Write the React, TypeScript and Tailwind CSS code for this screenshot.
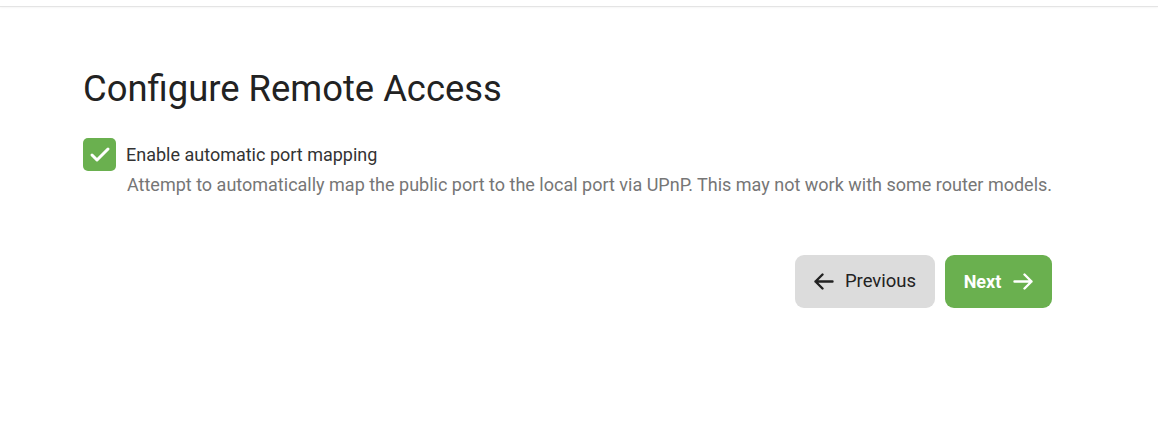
import { Check } from "lucide-react";

function Arrow({ dir }: { dir: "left" | "right" }) {
  return (
    <svg
      width="20"
      height="17"
      viewBox="0 0 20 17"
      fill="none"
      stroke="currentColor"
      strokeWidth="2.4"
      strokeLinecap="round"
      strokeLinejoin="round"
      className={dir === "right" ? "rotate-180" : ""}
    >
      <path d="M18.5 8.5H1.5M8.5 1.5L1.5 8.5L8.5 15.5" />
    </svg>
  );
}

export default function App() {
  return (
    <div className="min-h-[431px] bg-white font-['Roboto',sans-serif] text-[#222]">
      <div className="h-[7px] border-b border-[#e4e4e4] shadow-[0_1px_2px_rgba(0,0,0,0.04)]" />

      <div className="ml-[83px] w-[969px] pt-[60px]">
        <h1 className="text-[36.4px] leading-[43px] font-normal text-[#222]">
          Configure Remote Access
        </h1>

        <div className="mt-[28px] flex gap-[10px]">
          <div className="flex size-[33px] shrink-0 items-center justify-center rounded-[5px] bg-[#6ab04f]">
            <Check className="size-[24px] text-white" strokeWidth={3} />
          </div>
          <div className="flex flex-col pt-[6px]">
            <span className="text-[18px] leading-[22px] text-[#333]">
              Enable automatic port mapping
            </span>
            <span className="mt-[8px] pl-px whitespace-nowrap text-[18px] leading-[22px] text-[#767676]">
              Attempt to automatically map the public port to the local port via UPnP. This may not work with some router models.
            </span>
          </div>
        </div>

        <div className="mt-[59px] flex justify-end gap-[10px]">
          <button className="flex h-[53px] w-[140px] items-center justify-center gap-[11px] rounded-[9px] bg-[#dcdcdc] text-[18.5px] font-normal text-[#222]">
            <Arrow dir="left" />
            Previous
          </button>
          <button className="flex h-[53px] w-[107px] items-center justify-center gap-[12px] rounded-[9px] bg-[#6ab04f] text-[18px] font-bold text-white">
            Next
            <Arrow dir="right" />
          </button>
        </div>
      </div>
    </div>
  );
}
